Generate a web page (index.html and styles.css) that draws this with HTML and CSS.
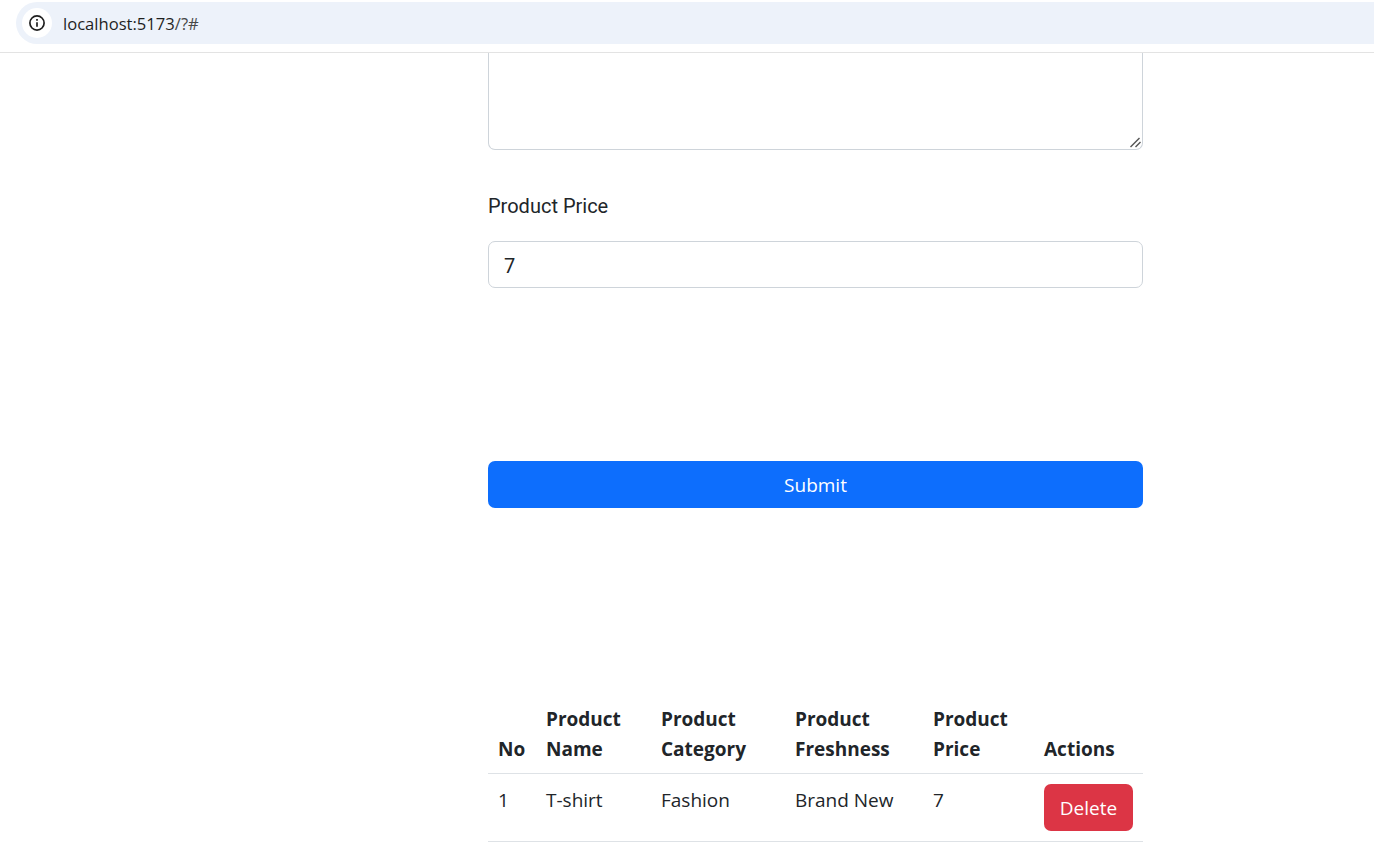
FILE: index.html
```html
<!DOCTYPE html>
<html lang="en">
<head>
  <meta charset="UTF-8" />
  <title>Products</title>
  <link rel="stylesheet" href="styles.css">
</head>
<body>

  <header class="browser-bar">
    <div class="omnibox">
      <span class="site-info">
        <svg width="18" height="18" viewBox="0 0 18 18" fill="none" stroke="#1f1f1f" stroke-width="1.7">
          <circle cx="9" cy="9" r="7.1"/>
          <path d="M9 8.2v4.6"/>
          <path d="M9 5v1.8"/>
        </svg>
      </span>
      <span class="url">localhost:5173<span class="url-rest">/?#</span></span>
    </div>
  </header>

  <main class="container">
    <form class="product-form">
      <div class="area-wrap">
        <textarea class="field-area" id="description"></textarea>
        <svg class="area-grip" width="11" height="11" viewBox="0 0 11 11" fill="none" stroke="#555" stroke-width="1.4">
          <path d="M0.5 10L9.5 1"/>
          <path d="M5.5 10L10.5 5"/>
        </svg>
      </div>

      <label class="field-label" for="price">Product Price</label>
      <input class="field-input" type="text" id="price" value="7">

      <button class="btn-submit" type="button">Submit</button>
    </form>

    <table class="product-table">
      <colgroup>
        <col class="col-no">
        <col class="col-name">
        <col class="col-category">
        <col class="col-freshness">
        <col class="col-price">
        <col class="col-actions">
      </colgroup>
      <thead>
        <tr>
          <th>No</th>
          <th>Product Name</th>
          <th>Product Category</th>
          <th>Product Freshness</th>
          <th>Product Price</th>
          <th>Actions</th>
        </tr>
      </thead>
      <tbody>
        <tr>
          <td>1</td>
          <td>T-shirt</td>
          <td>Fashion</td>
          <td>Brand New</td>
          <td>7</td>
          <td class="cell-action"><button class="btn-delete" type="button">Delete</button></td>
        </tr>
      </tbody>
    </table>
  </main>

</body>
</html>
```

FILE: styles.css
```css
* {
  box-sizing: border-box;
}

html, body {
  height: 100%;
}

body {
  margin: 0;
  overflow: hidden;
  background: #fff;
  color: #212529;
  font-family: "Open Sans", sans-serif;
}

/* browser chrome */
.browser-bar {
  height: 53px;
  padding: 2px 0 8px 16px;
  border-bottom: 1px solid #e3e3e3;
  background: #fff;
}

.omnibox {
  display: flex;
  align-items: center;
  height: 42px;
  padding-left: 6px;
  border-radius: 21px 0 0 21px;
  background: #edf2fa;
}

.site-info {
  display: flex;
  align-items: center;
  justify-content: center;
  width: 30px;
  height: 30px;
  border-radius: 50%;
  background: #fff;
}

.url {
  margin-left: 11px;
  padding-top: 1px;
  font-size: 16.6px;
  color: #1f1f1f;
}

.url-rest {
  color: #474747;
}

/* page */
.container {
  width: 655px;
  margin-left: 488px;
}

.area-wrap {
  position: relative;
}

.field-area {
  display: block;
  width: 100%;
  height: 97px;
  border: 1px solid #ced4da;
  border-top: none;
  border-radius: 0 0 7px 7px;
  background: #fff;
  resize: none;
}

.area-grip {
  position: absolute;
  right: 2px;
  bottom: 2px;
}

.field-label {
  display: block;
  margin-top: 41px;
  font-family: Roboto, sans-serif;
  font-size: 20px;
  line-height: 30px;
}

.field-input {
  display: block;
  width: 100%;
  height: 47px;
  margin-top: 20px;
  padding: 3px 15px 0;
  border: 1px solid #ced4da;
  border-radius: 7px;
  font-family: Roboto, sans-serif;
  font-size: 20px;
  color: #212529;
  background: #fff;
}

.btn-submit {
  display: block;
  width: 100%;
  height: 47px;
  margin-top: 173px;
  border: none;
  border-radius: 7px;
  background: #0d6efd;
  color: #fff;
  font-family: "Open Sans", sans-serif;
  font-size: 19px;
}

.product-table {
  width: 100%;
  margin-top: 186px;
  border-collapse: collapse;
  table-layout: fixed;
  font-size: 19px;
  line-height: 30px;
}

.col-no { width: 48px; }
.col-name { width: 115px; }
.col-category { width: 134px; }
.col-freshness { width: 138px; }
.col-price { width: 111px; }
.col-actions { width: 109px; }

.product-table th,
.product-table td {
  padding: 10px;
  border-bottom: 1px solid #dee2e6;
  text-align: left;
}

.product-table th {
  padding-bottom: 9px;
  vertical-align: bottom;
  font-weight: 700;
}

.product-table td {
  padding-top: 11px;
  padding-bottom: 9px;
  vertical-align: top;
}

.product-table .cell-action {
  padding-top: 10px;
  padding-bottom: 10px;
}

.btn-delete {
  display: block;
  width: 89px;
  height: 47px;
  border: none;
  border-radius: 7px;
  background: #dc3545;
  color: #fff;
  font-family: "Open Sans", sans-serif;
  font-size: 19px;
}
```
